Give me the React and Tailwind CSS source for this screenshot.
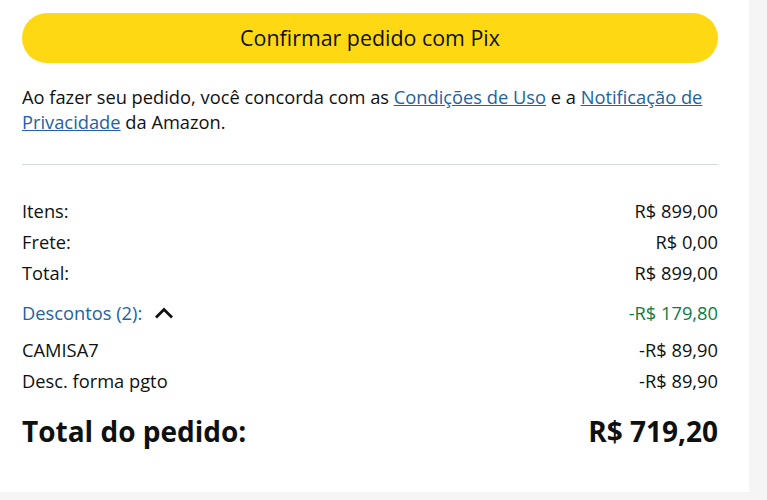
const rows = [
  { label: "Itens:", value: "R$ 899,00" },
  { label: "Frete:", value: "R$ 0,00" },
  { label: "Total:", value: "R$ 899,00" },
];

const discounts = [
  { label: "CAMISA7", value: "-R$ 89,90" },
  { label: "Desc. forma pgto", value: "-R$ 89,90" },
];

function ChevronUp() {
  return (
    <svg width="20" height="12" viewBox="0 0 20 12" className="ml-[12px]">
      <path d="M2 10.5 L10 2.5 L18 10.5" fill="none" stroke="#0f1111" strokeWidth="2.8" />
    </svg>
  );
}

export default function App() {
  return (
    <div className="w-[767px] h-[500px] bg-[#f5f5f5] font-['Open_Sans',sans-serif] text-[#0f1111]">
      <div className="w-[749px] h-[492px] bg-white pl-[22px] pr-[31px] pt-[13px]">
        {/* Place order button */}
        <button className="w-full h-[50px] rounded-full bg-[#ffd814] text-[21.4px] text-[#0f1111] flex items-center justify-center">
          Confirmar pedido com Pix
        </button>

        <p className="mt-[21px] text-[18.3px] leading-[25px]">
          Ao fazer seu pedido, você concorda com as{" "}
          <a className="text-[#2162a1] underline">Condições de Uso</a> e a{" "}
          <a className="text-[#2162a1] underline">Notificação de Privacidade</a> da Amazon.
        </p>

        <div className="mt-[30px] h-px bg-[#d5d9d9]" />

        {/* Order summary */}
        <div className="mt-[30px] text-[18.3px]">
          {rows.map((r) => (
            <div key={r.label} className="flex justify-between h-[31px] items-center">
              <span>{r.label}</span>
              <span>{r.value}</span>
            </div>
          ))}
          <div className="flex justify-between h-[40px] pt-[10px] items-center">
            <span className="flex items-center text-[#2162a1]">
              Descontos (2):
              <ChevronUp />
            </span>
            <span className="text-[#0b7d40]">-R$ 179,80</span>
          </div>
          <div className="mt-[6px]">
            {discounts.map((r) => (
              <div key={r.label} className="flex justify-between h-[31px] items-center">
                <span>{r.label}</span>
                <span>{r.value}</span>
              </div>
            ))}
          </div>
          <div className="flex justify-between items-center mt-[14px] text-[28px] leading-[42px] font-bold">
            <span>Total do pedido:</span>
            <span>R$ 719,20</span>
          </div>
        </div>
      </div>
    </div>
  );
}
